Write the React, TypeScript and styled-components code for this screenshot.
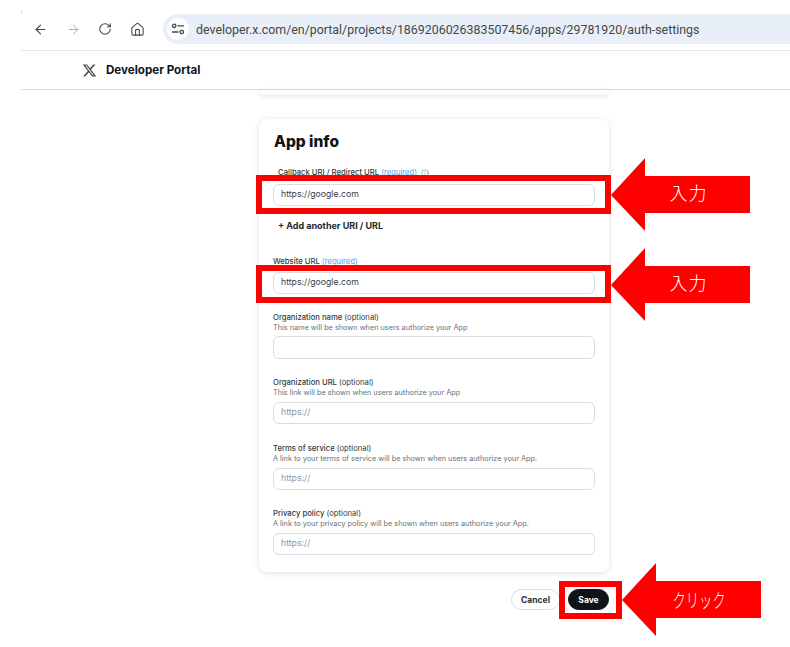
import React from 'react';
import styled, { createGlobalStyle } from 'styled-components';
import { ArrowLeft, ArrowRight, RotateCw, House, Info } from 'lucide-react';

const GlobalStyle = createGlobalStyle`
    html, body {
        margin: 0;
        padding: 0;
        background: #fff;
    }
    * {
        box-sizing: border-box;
    }
`
const Page = styled.div`
    position: relative;
    width: 790px;
    height: 647px;
    overflow: hidden;
    background: #fff;
    font-family: Inter, "Liberation Sans", sans-serif;
    color: #0f1419;
`
const BrowserBar = styled.div`
    position: relative;
    height: 51px;
    margin-left: 21px;
    padding: 14px 0 0 12px;
    display: flex;
    align-items: flex-start;
    border-bottom: 1px solid #e6e6e6;
    &::before {
        content: '';
        position: absolute;
        left: 0;
        top: 10px;
        width: 1px;
        height: 4px;
        background: #dddddd;
    }
`
const NavButton = styled.div<{ $width: number; $color?: string }>`
    width: ${p => p.$width}px;
    height: 30px;
    display: flex;
    align-items: center;
    color: ${p => p.$color || '#444746'};
`
const UrlBar = styled.div`
    flex: 1;
    height: 30px;
    padding-left: 4px;
    display: flex;
    align-items: center;
    background: #e9eff9;
    border-radius: 15px 0 0 15px;
`
const TuneBadge = styled.div`
    width: 22px;
    height: 22px;
    border-radius: 50%;
    background: #fff;
    display: flex;
    align-items: center;
    justify-content: center;
    margin-right: 7px;
`
const UrlText = styled.span`
    font-family: Roboto, "Open Sans", sans-serif;
    font-size: 12.4px;
    color: #444746;
    white-space: nowrap;
`
const PortalHeader = styled.div`
    height: 39px;
    margin-left: 21px;
    padding-left: 61px;
    display: flex;
    align-items: center;
    gap: 9px;
    border-bottom: 1px solid #dcdcdc;
`
const PortalTitle = styled.span`
    font-size: 11.6px;
    font-weight: 700;
`
const Main = styled.div`
    width: 350px;
    margin-left: 259px;
`
const PrevCard = styled.div`
    height: 5px;
    background: #fff;
    border-radius: 0 0 8px 8px;
    box-shadow: 0 1px 5px rgba(0, 0, 0, 0.12);
`
const Card = styled.div`
    margin-top: 24px;
    height: 453px;
    padding: 0 14px;
    background: #fff;
    border-radius: 8px;
    box-shadow: 0 1px 6px rgba(0, 0, 0, 0.12);
`
const CardTitle = styled.h2`
    margin: 0;
    height: 48px;
    padding: 13px 0 0 1px;
    font-size: 15.5px;
    line-height: 20px;
    font-weight: 800;
`
const Field = styled.div<{ $top?: number }>`
    margin-top: ${p => p.$top || 0}px;
`
const Label = styled.div<{ $indent?: number }>`
    height: 10px;
    padding: 2px 0 0 ${p => p.$indent || 0}px;
    display: flex;
    align-items: center;
    gap: 4px;
    font-size: 7.7px;
    line-height: 10px;
    font-weight: 500;
    color: #333a40;
    white-space: nowrap;
`
const Required = styled.span`
    color: #4aa3ee;
    font-weight: 400;
`
const Optional = styled.span`
    font-weight: 400;
`
const Hint = styled.div`
    height: 10px;
    font-size: 7.3px;
    line-height: 12px;
    color: #66717a;
    white-space: nowrap;
`
const TextInput = styled.input<{ $gap: number; $height?: number }>`
    display: block;
    width: 322px;
    height: ${p => p.$height || 22}px;
    margin-top: ${p => p.$gap}px;
    padding: 0 7px 2px;
    border: 1px solid #d6dee4;
    border-radius: 6px;
    outline: none;
    background: #fff;
    font-family: Inter, "Liberation Sans", sans-serif;
    font-size: 8.7px;
    color: #3a4248;
    &::placeholder {
        color: #8a98a3;
        opacity: 1;
    }
`
const AddLink = styled.div`
    margin-top: 13px;
    height: 14px;
    padding-left: 5px;
    font-size: 9px;
    line-height: 14px;
    font-weight: 700;
    color: #24292e;
`
const Actions = styled.div`
    margin-top: 17px;
    display: flex;
    justify-content: flex-end;
    gap: 8px;
`
const Pill = styled.button<{ $primary?: boolean }>`
    height: 21px;
    width: ${p => (p.$primary ? 41 : 49)}px;
    padding: 0;
    border-radius: 11px;
    border: 1px solid ${p => (p.$primary ? '#0f1419' : '#d6dee4')};
    background: ${p => (p.$primary ? '#0f1419' : '#fff')};
    color: ${p => (p.$primary ? '#fff' : '#2a3036')};
    font-family: Inter, "Liberation Sans", sans-serif;
    font-size: 8.5px;
    font-weight: 700;
`
// annotations drawn over the screenshot
const RedBox = styled.div<{ $x: number; $y: number; $w: number; $h: number }>`
    position: absolute;
    left: ${p => p.$x}px;
    top: ${p => p.$y}px;
    width: ${p => p.$w}px;
    height: ${p => p.$h}px;
    border: 6px solid #ff0000;
`
const ArrowWrap = styled.div<{ $x: number; $y: number }>`
    position: absolute;
    left: ${p => p.$x}px;
    top: ${p => p.$y}px;
    width: 139px;
    height: 73px;
    display: flex;
    align-items: center;
    justify-content: center;
    svg {
        position: absolute;
        inset: 0;
    }
`
const ArrowLabel = styled.span<{ $squeeze?: boolean }>`
    position: relative;
    margin-left: ${p => (p.$squeeze ? 15 : 16)}px;
    margin-bottom: ${p => (p.$squeeze ? 0 : 6)}px;
    font-family: "Noto Sans CJK JP", sans-serif;
    font-size: ${p => (p.$squeeze ? 19 : 18)}px;
    font-weight: 300;
    line-height: 20px;
    letter-spacing: ${p => (p.$squeeze ? 0 : 1)}px;
    transform: scaleX(${p => (p.$squeeze ? 0.7 : 1)});
    color: #fff;
    white-space: nowrap;
`

const XLogo = () => (
    <svg width="15" height="15" viewBox="0 0 24 24" fill="#44494e">
        <path d="M18.244 2.25h3.308l-7.227 8.26 8.502 11.24H16.17l-5.214-6.817L4.99 21.75H1.68l7.73-8.835L1.254 2.25H8.08l4.713 6.231zm-1.161 17.52h1.833L7.084 4.126H5.117z" />
    </svg>
)

const TuneIcon = () => (
    <svg width="14" height="12" viewBox="0 0 14 12" fill="none" stroke="#444746" strokeWidth="1.3">
        <circle cx="3.2" cy="2.8" r="1.7" />
        <path d="M6.5 2.8h6.5M1 9h6.5" />
        <circle cx="10.8" cy="9" r="1.7" />
    </svg>
)

const Arrow = ({ x, y, label, squeeze }: { x: number; y: number; label: string; squeeze?: boolean }) => (
    <ArrowWrap $x={x} $y={y}>
        <svg width="139" height="73" viewBox="0 0 139 73">
            <polygon points="0,37 34,0 34,18 139,18 139,55 34,55 34,73" fill="#ff0000" />
        </svg>
        <ArrowLabel $squeeze={squeeze}>{label}</ArrowLabel>
    </ArrowWrap>
)

const App = () => {
    return (
        <Page>
            <GlobalStyle />
            <BrowserBar>
                <NavButton $width={33}><ArrowLeft size={15} strokeWidth={1.8} /></NavButton>
                <NavButton $width={32} $color='#a8abad'><ArrowRight size={15} strokeWidth={1.6} /></NavButton>
                <NavButton $width={32}><RotateCw size={14} strokeWidth={1.8} /></NavButton>
                <NavButton $width={33}><House size={15} strokeWidth={1.7} /></NavButton>
                <UrlBar>
                    <TuneBadge><TuneIcon /></TuneBadge>
                    <UrlText>developer.x.com/en/portal/projects/1869206026383507456/apps/29781920/auth-settings</UrlText>
                </UrlBar>
            </BrowserBar>
            <PortalHeader>
                <XLogo />
                <PortalTitle>Developer Portal</PortalTitle>
            </PortalHeader>
            <Main>
                <PrevCard />
                <Card>
                    <CardTitle>App info</CardTitle>
                    <Field>
                        <Label $indent={5}>
                            <span>Callback URI / Redirect URL <Required>(required)</Required></span>
                            <Info size={8} strokeWidth={1.5} color='#66717a' />
                        </Label>
                        <TextInput $gap={7} readOnly defaultValue='https://google.com' />
                    </Field>
                    <AddLink>+ Add another URI / URL</AddLink>
                    <Field $top={23}>
                        <Label><span>Website URL <Required>(required)</Required></span></Label>
                        <TextInput $gap={6} readOnly defaultValue='https://google.com' />
                    </Field>
                    <Field $top={18}>
                        <Label><span>Organization name <Optional>(optional)</Optional></span></Label>
                        <Hint>This name will be shown when users authorize your App</Hint>
                        <TextInput $gap={4} $height={23} readOnly />
                    </Field>
                    <Field $top={18}>
                        <Label><span>Organization URL <Optional>(optional)</Optional></span></Label>
                        <Hint>This link will be shown when users authorize your App</Hint>
                        <TextInput $gap={5} readOnly placeholder='https://' />
                    </Field>
                    <Field $top={19}>
                        <Label><span>Terms of service <Optional>(optional)</Optional></span></Label>
                        <Hint>A link to your terms of service will be shown when users authorize your App.</Hint>
                        <TextInput $gap={5} readOnly placeholder='https://' />
                    </Field>
                    <Field $top={18}>
                        <Label><span>Privacy policy <Optional>(optional)</Optional></span></Label>
                        <Hint>A link to your privacy policy will be shown when users authorize your App.</Hint>
                        <TextInput $gap={5} readOnly placeholder='https://' />
                    </Field>
                </Card>
                <Actions>
                    <Pill>Cancel</Pill>
                    <Pill $primary>Save</Pill>
                </Actions>
            </Main>
            <RedBox $x={256} $y={175} $w={355} $h={39} />
            <RedBox $x={256} $y={265} $w={355} $h={38} />
            <RedBox $x={559} $y={581} $w={63} $h={38} />
            <Arrow x={611} y={158} label='入力' />
            <Arrow x={611} y={248} label='入力' />
            <Arrow x={622} y={563} label='クリック' squeeze />
        </Page>
    )
}

export default App
